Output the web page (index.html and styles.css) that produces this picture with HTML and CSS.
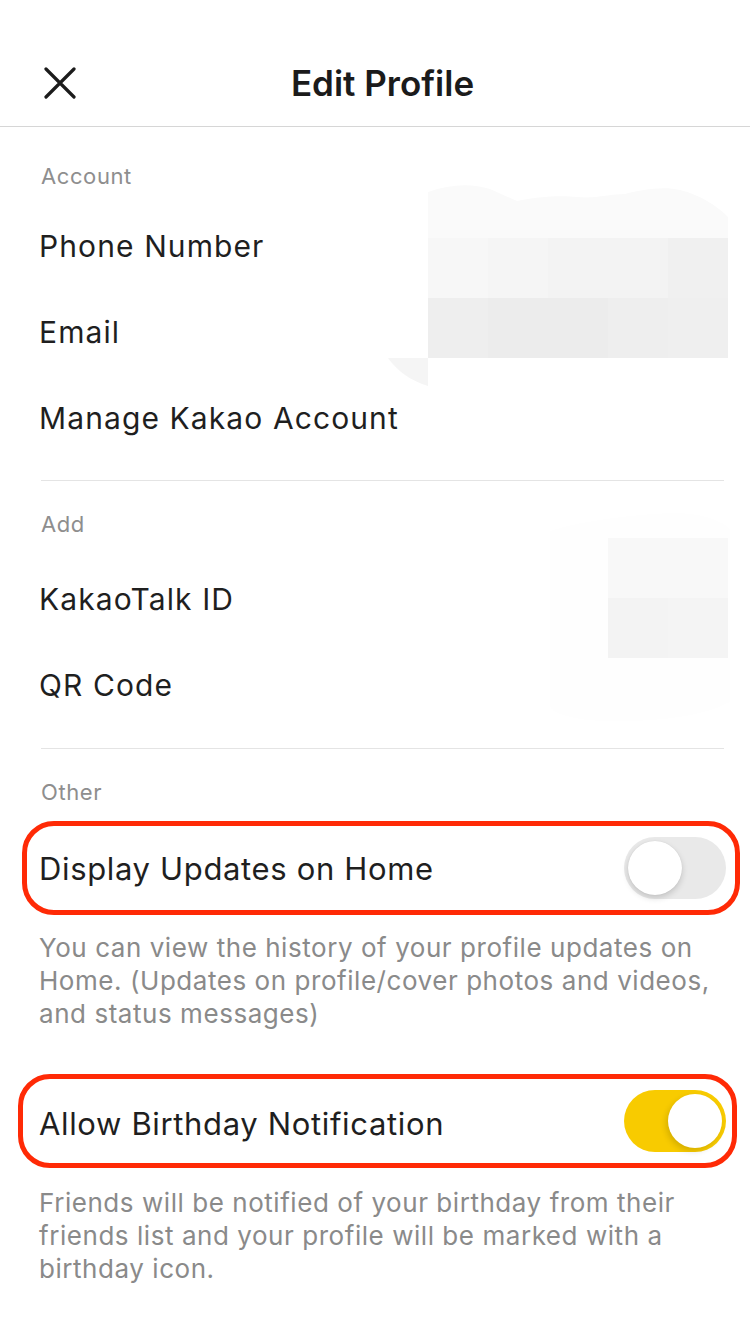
FILE: index.html
```html
<!DOCTYPE html>
<html lang="en">
<head>
<meta charset="utf-8">
<title>Edit Profile</title>
<link rel="stylesheet" href="styles.css">
</head>
<body>
<div class="screen">
  <header class="topbar">
    <button class="close" aria-label="Close">
      <svg viewBox="0 0 32 32" width="32" height="32"><path d="M2 2 L30 30 M30 2 L2 30" stroke="#1b1b1b" stroke-width="3.2" stroke-linecap="round" fill="none"/></svg>
    </button>
    <h1 class="title">Edit Profile</h1>
  </header>

  <section class="group group-account">
    <div class="label">Account</div>
    <div class="row">Phone Number</div>
    <div class="row">Email</div>
    <div class="row">Manage Kakao Account</div>
    <svg class="mosaic mosaic-1" viewBox="0 0 370 220" width="370" height="220">
      <path d="M48,23 C70,15 92,14 110,20 L137,32 C155,28 180,26 197,28 C215,30 230,25 245,25 C262,21 282,17 300,21 C320,26 336,36 348,48 L348,69 L48,69 Z" fill="#fafafa"/>
      <rect x="48" y="69" width="60" height="60" fill="#f7f7f7"/>
      <rect x="108" y="69" width="60" height="60" fill="#f5f5f5"/>
      <rect x="168" y="69" width="60" height="60" fill="#f3f3f3"/>
      <rect x="228" y="69" width="60" height="60" fill="#f3f3f3"/>
      <rect x="288" y="69" width="60" height="60" fill="#f0f0f0"/>
      <rect x="48" y="129" width="60" height="60" fill="#eeeeee"/>
      <rect x="108" y="129" width="60" height="60" fill="#ececec"/>
      <rect x="168" y="129" width="60" height="60" fill="#ececec"/>
      <rect x="228" y="129" width="60" height="60" fill="#eeeeee"/>
      <rect x="288" y="129" width="60" height="60" fill="#efefef"/>
      <path d="M48,189 L8,189 C18,203 32,212 48,217 Z" fill="#f5f5f5"/>
    </svg>
  </section>

  <hr class="sep">

  <section class="group group-add">
    <div class="label">Add</div>
    <div class="row">KakaoTalk ID</div>
    <div class="row">QR Code</div>
    <svg class="mosaic mosaic-2" viewBox="0 0 200 230" width="200" height="230">
      <path d="M10,30 C40,20 90,14 130,12 C160,11 185,20 190,30 L190,200 C170,215 110,222 60,220 C30,218 12,212 10,205 Z" fill="#fefefe"/>
      <rect x="68" y="37" width="60" height="60" fill="#f8f8f8"/>
      <rect x="128" y="37" width="60" height="60" fill="#f8f8f8"/>
      <rect x="68" y="97" width="60" height="60" fill="#f3f3f3"/>
      <rect x="128" y="97" width="60" height="60" fill="#f4f4f4"/>
    </svg>
  </section>

  <hr class="sep">

  <section class="group group-other">
    <div class="label">Other</div>
    <div class="toggle-row hl hl-a">
      <span class="toggle-text">Display Updates on Home</span>
      <span class="switch"><span class="knob"></span></span>
    </div>
    <p class="desc desc-a">You can view the history of your profile updates on Home. (Updates on profile/cover photos and videos, and status messages)</p>
    <div class="toggle-row hl hl-b">
      <span class="toggle-text">Allow Birthday Notification</span>
      <span class="switch on"><span class="knob"></span></span>
    </div>
    <p class="desc desc-b">Friends will be notified of your birthday from their friends list and your profile will be marked with a birthday icon.</p>
  </section>
</div>
</body>
</html>
```

FILE: styles.css
```css
* { box-sizing: border-box; }
html, body { margin: 0; padding: 0; background: #ffffff; }
body {
  font-family: Inter, "Noto Sans", "Liberation Sans", sans-serif;
  color: #1f1f1f;
  -webkit-font-smoothing: antialiased;
}
.screen { width: 750px; min-height: 1334px; background: #fff; overflow: hidden; }

.topbar {
  height: 127px;
  padding-top: 40px;
  display: flex;
  align-items: center;
  border-bottom: 1px solid #d6d6d6;
}
.close {
  margin-left: 44px;
  width: 32px;
  height: 32px;
  padding: 0;
  border: 0;
  background: none;
  display: flex;
}
.title {
  flex: 1;
  margin: 0;
  padding-right: 61px;
  text-align: center;
  font-size: 35px;
  font-weight: 600;
  letter-spacing: 0;
  color: #1b1b1b;
}

.group { position: relative; }
.label {
  padding-left: 41px;
  font-size: 22px;
  line-height: 30px;
  letter-spacing: 0.6px;
  color: #8e8e8e;
}
.group-account .label { padding-top: 34px; padding-bottom: 12px; }
.group-add .label { padding-top: 28px; padding-bottom: 17px; }
.group-other .label { padding-top: 28px; padding-bottom: 14px; }

.row {
  height: 86px;
  display: flex;
  align-items: center;
  padding-left: 39px;
  font-size: 30px;
  letter-spacing: 1.1px;
  color: #1f1f1f;
}
.group-account { padding-bottom: 19px; }
.group-add { padding-bottom: 20px; }

.sep {
  margin: 0 26px 0 41px;
  border: 0;
  border-top: 1px solid #e4e4e4;
  height: 0;
}

.mosaic { position: absolute; pointer-events: none; }
.mosaic-1 { left: 380px; top: 42px; }
.mosaic-2 { left: 540px; top: 20px; }

.toggle-row {
  display: flex;
  align-items: center;
  justify-content: space-between;
  font-size: 31px;
  letter-spacing: 0.65px;
  color: #1f1f1f;
}
.hl {
  border: 5px solid #ff2a06;
  border-radius: 32px;
}
.hl-a { margin: 0 10px 0 22px; height: 94px; padding: 0 9px 0 12px; }
.hl-b { margin: 0 13px 0 18px; height: 94px; padding: 0 6px 0 16px; }
.hl-b .toggle-text { padding-top: 4px; }

.switch {
  position: relative;
  width: 102px;
  height: 62px;
  border-radius: 31px;
  background: #e9e9e9;
  flex: none;
}
.switch .knob {
  position: absolute;
  top: 4px;
  left: 4px;
  width: 54px;
  height: 54px;
  border-radius: 50%;
  background: #fff;
  box-shadow: 0 3px 6px rgba(0,0,0,0.16), 0 0 1px rgba(0,0,0,0.12);
}
.switch.on { background: #f8cb00; }
.switch.on .knob { left: 44px; box-shadow: -2px 3px 6px rgba(0,0,0,0.14); }

.desc {
  margin: 0;
  padding: 0 20px 0 39px;
  font-size: 26px;
  line-height: 33px;
  letter-spacing: 0.55px;
  color: #8a8a8a;
}
.desc-a { margin-top: 16px; margin-bottom: 44px; }
.desc-b { margin-top: 18px; }
```
